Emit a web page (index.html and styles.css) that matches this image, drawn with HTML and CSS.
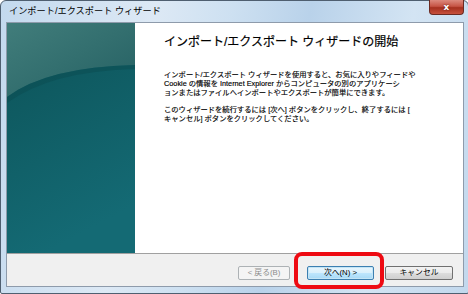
FILE: index.html
```html
<!DOCTYPE html>
<html lang="ja">

<head>
    <meta charset="UTF-8">
    <title>インポート/エクスポート ウィザード</title>
    <link rel="stylesheet" href="styles.css">
</head>

<body>

    <div class="window">
        <!-- Barra de título -->
        <div class="titlebar">
            <span class="title">インポート/エクスポート ウィザード</span>
            <button class="close-btn">x</button>
        </div>

        <div class="client">
            <div class="content">
                <div class="side-panel">
                    <svg width="128" height="230" viewBox="0 0 128 230" preserveAspectRatio="none">
                        <defs>
                            <linearGradient id="bottomGrad" x1="0" y1="0" x2="0.3" y2="1">
                                <stop offset="0" stop-color="#0c5257" />
                                <stop offset="1" stop-color="#146a74" />
                            </linearGradient>
                            <linearGradient id="topGrad" x1="0" y1="0" x2="1" y2="1">
                                <stop offset="0" stop-color="#417d7b" />
                                <stop offset="0.5" stop-color="#336f6f" />
                                <stop offset="1" stop-color="#245f62" />
                            </linearGradient>
                        </defs>
                        <rect width="128" height="230" fill="url(#bottomGrad)" />
                        <path d="M0,0 H128 V42 Q40,44 0,74 Z" fill="url(#topGrad)" />
                        <path d="M0,74 Q40,44 128,42 V46 Q44,48 0,80 Z" fill="#0b4f54" opacity="0.6" />
                    </svg>
                </div>
                <div class="main">
                    <h1>インポート/エクスポート ウィザードの開始</h1>
                    <p>インポート/エクスポート ウィザードを使用すると、お気に入りやフィードや<br>Cookie の情報を Internet Explorer からコンピュータの別のアプリケーシ<br>ョンまたはファイルへインポートやエクスポートが簡単にできます。</p>
                    <p>このウィザードを続行するには [次へ] ボタンをクリックし、終了するには [<br>キャンセル] ボタンをクリックしてください。</p>
                </div>
            </div>

            <!-- Botones -->
            <div class="buttons">
                <button class="btn btn-back" disabled>&lt; 戻る(B)</button>
                <button class="btn btn-next">次へ(N) &gt;</button>
                <button class="btn btn-cancel">キャンセル</button>
                <div class="highlight"></div>
            </div>
        </div>
    </div>

</body>

</html>
```

FILE: styles.css
```css
body {
    margin: 0;
    background: #ffffff;
    font-family: "Liberation Sans", "Noto Sans CJK JP", sans-serif;
}

.window {
    width: 458px;
    height: 287px;
    padding: 0 4px 5px 5px;
    border: 1px solid #4f5f70;
    border-radius: 6px 6px 2px 2px;
    background: linear-gradient(100deg, #c3d9ee 0%, #dde9f5 30%, #cde0f1 45%, #b9d2ea 60%, #d3e4f3 80%, #c2d8ed 100%);
}

.titlebar {
    height: 21px;
    display: flex;
    justify-content: space-between;
    align-items: flex-start;
    padding-left: 3px;
}

.title {
    font-size: 9.2px;
    line-height: 21px;
    color: #000;
    white-space: nowrap;
}

.close-btn {
    width: 35px;
    height: 15px;
    margin-top: -1px;
    padding: 0;
    border: 1px solid #6b2a22;
    border-top: none;
    border-radius: 0 0 4px 4px;
    background: linear-gradient(#dc8a7e, #c65445 45%, #a5301f 55%, #c7513d);
    color: #fff;
    font-family: "DejaVu Sans", sans-serif;
    font-weight: bold;
    font-size: 9px;
    line-height: 12px;
    text-shadow: 0 0 2px #5a1a10;
}

.client {
    position: relative;
    border: 1px solid #8e9bab;
    background: #f0f0f0;
}

.content {
    display: flex;
    height: 230px;
    border-bottom: 1px solid #a0a0a0;
}

.side-panel {
    width: 128px;
    height: 230px;
}

.side-panel svg {
    display: block;
}

.main {
    flex: 1;
    background: #ffffff;
    padding: 12px 0 0 29px;
}

h1 {
    margin: 0 0 21px 0;
    font-size: 12px;
    font-weight: normal;
    line-height: 14px;
    color: #000;
    white-space: nowrap;
    -webkit-text-stroke: 0.2px #000;
}

p {
    margin: 0 0 8px 0;
    font-size: 7.3px;
    line-height: 9px;
    color: #000;
    white-space: nowrap;
    -webkit-text-stroke: 0.15px #000;
}

.buttons {
    height: 32px;
    display: flex;
    justify-content: flex-end;
    align-items: flex-start;
    padding-right: 10px;
}

.btn {
    height: 14px;
    margin-top: 12px;
    padding: 0;
    border: 1px solid #707070;
    border-radius: 2px;
    background: linear-gradient(#f2f2f2 0%, #ebebeb 50%, #dddddd 51%, #cfcfcf 100%);
    font-family: "Liberation Sans", "Noto Sans CJK JP", sans-serif;
    font-size: 7.8px;
    line-height: 12px;
    color: #000;
}

.btn-back {
    width: 52px;
    border-color: #adb2b5;
    background: #f4f4f4;
    color: #8d8d8d;
}

.btn-next {
    width: 67px;
    margin-left: 17px;
    border-color: #3c7fb1;
    background: linear-gradient(#eaf6fd 0%, #d9f0fc 50%, #bee6fd 51%, #a7d9f5 100%);
    box-shadow: inset 0 0 0 1px #c4e5f6;
}

.btn-cancel {
    width: 68px;
    margin-left: 11px;
}

.highlight {
    position: absolute;
    left: 287px;
    bottom: -3px;
    width: 82px;
    height: 29px;
    border: 4px solid #ee0a12;
    border-radius: 8px;
}
```
